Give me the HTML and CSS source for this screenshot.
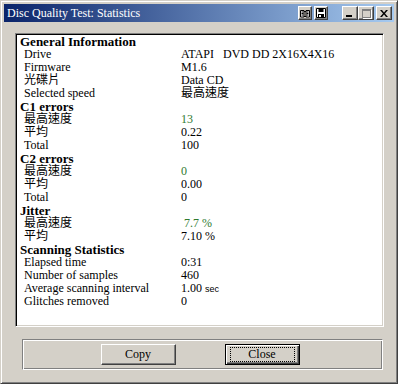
FILE: index.html
```html
<!DOCTYPE html>
<html lang="zh-Hant">
<head>
    <meta charset="UTF-8">
    <title>Disc Quality Test: Statistics</title>
    <link rel="stylesheet" href="styles.css">
</head>
<body>
    <div class="window">
        <div class="titlebar">
            <span class="title">Disc Quality Test: Statistics</span>
            <div class="tools">
                <span class="tbtn small">
                    <svg width="10" height="9" viewBox="0 0 10 9"><path d="M0.5 1.5h3.5v6.5h-3.5zM6 1.5h3.5v6.5h-3.5z" fill="#fff" stroke="#000"/><path d="M1.5 3h2M1.5 4.5h2M1.5 6h2M6.5 3h2M6.5 4.5h2M6.5 6h2" stroke="#000"/><path d="M4 2.5h2M4 7.5h2" stroke="#000"/></svg>
                </span>
                <span class="tbtn small">
                    <svg width="10" height="10" viewBox="0 0 10 10"><path d="M0.5 0.5h9v9h-9z" fill="#fff" stroke="#000"/><path d="M2.5 0.5h5v3.5h-5z" fill="#000"/><path d="M2 6h6v3.5h-6z" fill="#000"/><path d="M3 7h2v2h-2z" fill="#fff"/></svg>
                </span>
            </div>
            <div class="caps">
                <span class="tbtn"><i class="minbar"></i></span>
                <span class="tbtn"><i class="maxbox"></i></span>
                <span class="tbtn close">
                    <svg width="8" height="7" viewBox="0 0 8 7"><path d="M0 0h2l2 2.5 2-2.5h2l-3 3.5 3 3.5h-2l-2-2.5-2 2.5h-2l3-3.5z" fill="#000"/></svg>
                </span>
            </div>
        </div>

        <div class="panel">
            <div class="stats">
                <div class="head">General Information</div>
                <div class="label">Drive</div><div class="value pre">ATAPI   DVD DD 2X16X4X16</div>
                <div class="label">Firmware</div><div class="value">M1.6</div>
                <div class="label">光碟片</div><div class="value">Data CD</div>
                <div class="label">Selected speed</div><div class="value">最高速度</div>

                <div class="head">C1 errors</div>
                <div class="label">最高速度</div><div class="value good">13</div>
                <div class="label">平均</div><div class="value">0.22</div>
                <div class="label">Total</div><div class="value">100</div>

                <div class="head">C2 errors</div>
                <div class="label">最高速度</div><div class="value good">0</div>
                <div class="label">平均</div><div class="value">0.00</div>
                <div class="label">Total</div><div class="value">0</div>

                <div class="head">Jitter</div>
                <div class="label">最高速度</div><div class="value good shift">7.7 %</div>
                <div class="label">平均</div><div class="value">7.10 %</div>

                <div class="head">Scanning Statistics</div>
                <div class="label">Elapsed time</div><div class="value">0:31</div>
                <div class="label">Number of samples</div><div class="value">460</div>
                <div class="label">Average scanning interval</div><div class="value">1.00 <span class="unit">sec</span></div>
                <div class="label">Glitches removed</div><div class="value">0</div>
            </div>
        </div>

        <div class="actions">
            <button class="button">Copy</button>
            <button class="button default"><span class="focus">Close</span></button>
        </div>
    </div>
</body>
</html>
```

FILE: styles.css
```css
body {
    margin: 0;
    background-color: #d4d0c8;
    font-family: "Liberation Serif", "Noto Sans CJK TC", serif;
    font-size: 12px;
    color: #000;
}
.window {
    width: 398px;
    height: 384px;
    box-sizing: border-box;
    background-color: #d4d0c8;
    border: 1px solid;
    border-color: #d4d0c8 #404040 #404040 #d4d0c8;
    box-shadow: inset 1px 1px #fff, inset -1px -1px #808080;
    padding: 3px;
    display: flex;
    flex-direction: column;
}
.titlebar {
    height: 18px;
    display: flex;
    align-items: center;
    background: linear-gradient(to right, #0a246a, #a6caf0);
    color: #fff;
    padding: 0 2px 0 3px;
}
.title {
    flex: 1;
    font-size: 12px;
}
.tools, .caps {
    display: flex;
    gap: 2px;
}
.tools {
    margin-right: 14px;
}
.caps {
    gap: 0;
}
.caps .close {
    margin-left: 2px;
}
.tbtn {
    width: 16px;
    height: 14px;
    box-sizing: border-box;
    background-color: #d4d0c8;
    border: 1px solid;
    border-color: #fff #404040 #404040 #fff;
    box-shadow: inset -1px -1px #808080;
    display: flex;
    align-items: center;
    justify-content: center;
}
.tbtn.small {
    width: 14px;
}
.minbar {
    width: 6px;
    height: 2px;
    background-color: #000;
    margin-top: 6px;
    margin-left: -2px;
}
.maxbox {
    width: 7px;
    height: 6px;
    border: 1px solid #808080;
    border-top-width: 2px;
    box-shadow: 1px 1px #fff;
}
.panel {
    height: 294px;
    margin: 11px 10px 0 11px;
    box-sizing: border-box;
    background-color: #fff;
    border: 1px solid;
    border-color: #808080 #fff #fff #808080;
    box-shadow: inset 1px 1px #000, inset -1px -1px #d4d0c8;
    padding: 1px 2px 0 4px;
}
.stats {
    display: grid;
    grid-template-columns: 161px 1fr;
    grid-auto-rows: 13px;
    line-height: 13px;
}
.head {
    grid-column: 1 / 3;
    font-weight: bold;
    font-size: 13px;
}
.label {
    padding-left: 4px;
    white-space: nowrap;
}
.value {
    white-space: nowrap;
}
.pre {
    white-space: pre;
}
.good {
    color: #2f7a2f;
}
.shift {
    padding-left: 3px;
}
.unit {
    font-family: "Liberation Sans", sans-serif;
    font-size: 9px;
}
.actions {
    height: 31px;
    margin: 12px 11px 0 18px;
    box-sizing: border-box;
    border: 1px solid;
    border-color: #808080 #fff #fff #808080;
    box-shadow: inset 1px 1px #fff, inset -1px -1px #808080;
    display: flex;
    align-items: center;
    justify-content: center;
    gap: 49px;
    padding-right: 5px;
}
.button {
    width: 75px;
    height: 21px;
    box-sizing: border-box;
    background-color: #d4d0c8;
    font-family: "Liberation Serif", serif;
    font-size: 12px;
    color: #000;
    border: 1px solid;
    border-color: #fff #404040 #404040 #fff;
    box-shadow: inset -1px -1px #808080;
    padding: 0;
    display: flex;
    align-items: center;
    justify-content: center;
}
.button.default {
    border: 1px solid #000;
    box-shadow: inset 1px 1px #fff, inset -1px -1px #404040, inset -2px -2px #808080;
}
.focus {
    width: 63px;
    height: 13px;
    line-height: 13px;
    border: 1px dotted #000;
    text-align: center;
}
```
